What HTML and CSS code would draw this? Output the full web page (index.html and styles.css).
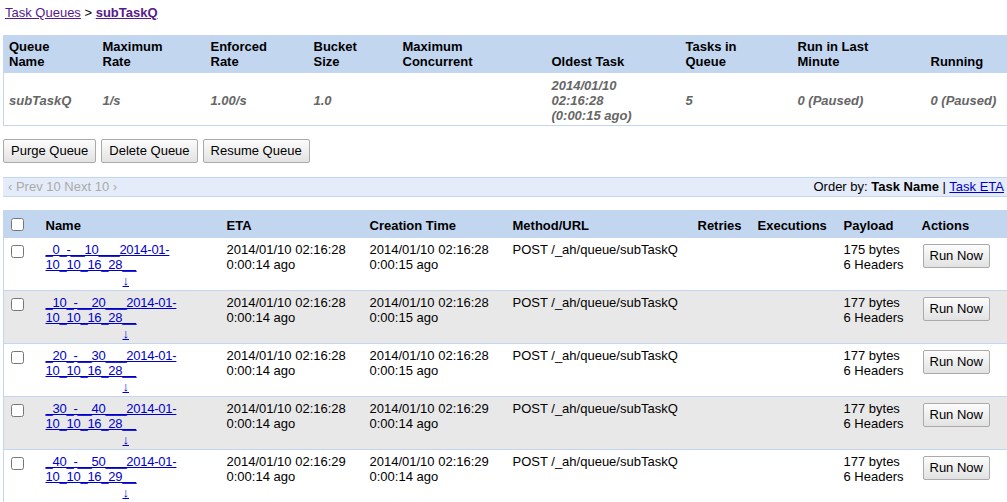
FILE: index.html
```html
<!DOCTYPE html>
<html lang="en">
<head>
  <meta charset="UTF-8" />
  <title>subTaskQ - Task Queues</title>
  <link rel="stylesheet" href="styles.css">
</head>
<body>

  <div class="crumbs">
    <a href="#" class="visited">Task Queues</a> &gt; <a href="#" class="visited"><b>subTaskQ</b></a>
  </div>

  <!-- Queue summary -->
  <table class="queue">
    <colgroup>
      <col style="width:94px"><col style="width:108px"><col style="width:103px">
      <col style="width:89px"><col style="width:149px"><col style="width:134px">
      <col style="width:112px"><col style="width:133px"><col style="width:82px">
    </colgroup>
    <thead>
      <tr>
        <th>Queue<br>Name</th>
        <th>Maximum<br>Rate</th>
        <th>Enforced<br>Rate</th>
        <th>Bucket<br>Size</th>
        <th>Maximum<br>Concurrent</th>
        <th>Oldest Task</th>
        <th>Tasks in<br>Queue</th>
        <th>Run in Last<br>Minute</th>
        <th>Running</th>
      </tr>
    </thead>
    <tbody>
      <tr>
        <td>subTaskQ</td>
        <td>1/s</td>
        <td>1.00/s</td>
        <td>1.0</td>
        <td></td>
        <td>2014/01/10<br>02:16:28<br>(0:00:15 ago)</td>
        <td>5</td>
        <td>0 (Paused)</td>
        <td>0 (Paused)</td>
      </tr>
    </tbody>
  </table>

  <div class="actions">
    <button class="btn">Purge Queue</button>
    <button class="btn">Delete Queue</button>
    <button class="btn">Resume Queue</button>
  </div>

  <div class="pager">
    <span class="disabled">&lsaquo; Prev 10 Next 10 &rsaquo;</span>
    <span class="order">Order by: <b>Task Name</b> | <a href="#">Task ETA</a></span>
  </div>

  <!-- Tasks -->
  <table class="tasks">
    <colgroup>
      <col style="width:37px"><col style="width:181px"><col style="width:143px">
      <col style="width:143px"><col style="width:185px"><col style="width:60px">
      <col style="width:86px"><col style="width:78px"><col style="width:91px">
    </colgroup>
    <thead>
      <tr>
        <th class="check"><input type="checkbox"></th>
        <th>Name</th>
        <th>ETA</th>
        <th>Creation Time</th>
        <th>Method/URL</th>
        <th>Retries</th>
        <th>Executions</th>
        <th>Payload</th>
        <th>Actions</th>
      </tr>
    </thead>
    <tbody>
      <tr>
        <td class="check"><input type="checkbox"></td>
        <td><a href="#" class="name">_0_-__10___2014-01-<br>10_10_16_28__</a><a href="#" class="expand">&darr;</a></td>
        <td>2014/01/10 02:16:28<br>0:00:14 ago</td>
        <td>2014/01/10 02:16:28<br>0:00:15 ago</td>
        <td>POST /_ah/queue/subTaskQ</td>
        <td></td>
        <td></td>
        <td>175 bytes<br>6 Headers</td>
        <td><button class="btn run">Run Now</button></td>
      </tr>
      <tr class="alt">
        <td class="check"><input type="checkbox"></td>
        <td><a href="#" class="name">_10_-__20___2014-01-<br>10_10_16_28__</a><a href="#" class="expand">&darr;</a></td>
        <td>2014/01/10 02:16:28<br>0:00:14 ago</td>
        <td>2014/01/10 02:16:28<br>0:00:15 ago</td>
        <td>POST /_ah/queue/subTaskQ</td>
        <td></td>
        <td></td>
        <td>177 bytes<br>6 Headers</td>
        <td><button class="btn run">Run Now</button></td>
      </tr>
      <tr>
        <td class="check"><input type="checkbox"></td>
        <td><a href="#" class="name">_20_-__30___2014-01-<br>10_10_16_28__</a><a href="#" class="expand">&darr;</a></td>
        <td>2014/01/10 02:16:28<br>0:00:14 ago</td>
        <td>2014/01/10 02:16:28<br>0:00:15 ago</td>
        <td>POST /_ah/queue/subTaskQ</td>
        <td></td>
        <td></td>
        <td>177 bytes<br>6 Headers</td>
        <td><button class="btn run">Run Now</button></td>
      </tr>
      <tr class="alt">
        <td class="check"><input type="checkbox"></td>
        <td><a href="#" class="name">_30_-__40___2014-01-<br>10_10_16_28__</a><a href="#" class="expand">&darr;</a></td>
        <td>2014/01/10 02:16:28<br>0:00:14 ago</td>
        <td>2014/01/10 02:16:29<br>0:00:14 ago</td>
        <td>POST /_ah/queue/subTaskQ</td>
        <td></td>
        <td></td>
        <td>177 bytes<br>6 Headers</td>
        <td><button class="btn run">Run Now</button></td>
      </tr>
      <tr>
        <td class="check"><input type="checkbox"></td>
        <td><a href="#" class="name">_40_-__50___2014-01-<br>10_10_16_29__</a><a href="#" class="expand">&darr;</a></td>
        <td>2014/01/10 02:16:29<br>0:00:14 ago</td>
        <td>2014/01/10 02:16:29<br>0:00:14 ago</td>
        <td>POST /_ah/queue/subTaskQ</td>
        <td></td>
        <td></td>
        <td>177 bytes<br>6 Headers</td>
        <td><button class="btn run">Run Now</button></td>
      </tr>
    </tbody>
  </table>

</body>
</html>
```

FILE: styles.css
```css
* {
  box-sizing: border-box;
}

body {
  margin: 0;
  padding: 5px 0 0 3px;
  font-family: 'Liberation Sans', Arial, sans-serif;
  font-size: 13px;
  line-height: 15px;
  color: #000;
  background: #fff;
  overflow: hidden;
}

a {
  color: #00c;
}

a.visited {
  color: #551a8b;
}

.crumbs {
  padding-left: 2px;
  height: 16px;
  line-height: 16px;
  font-size: 13px;
}

table {
  border-collapse: collapse;
  table-layout: fixed;
  width: 1004px;
}

th {
  background: #c3d6f0;
  text-align: left;
  font-weight: bold;
  padding: 0 5px;
}

td {
  padding: 0 5px;
}

/* queue summary */
.queue {
  margin-top: 14px;
  border-left: 1px solid #c3d6f0;
}

.queue th {
  vertical-align: bottom;
  height: 38px;
  padding-top: 4px;
  padding-bottom: 4px;
}

.queue td {
  height: 52px;
  padding-top: 4px;
  color: #666;
  font-weight: bold;
  font-style: italic;
  vertical-align: middle;
  border-bottom: 1px solid #c3d6f0;
}

/* buttons */
.actions {
  display: flex;
  gap: 5px;
  margin-top: 13px;
}

.btn {
  font-family: 'Liberation Sans', Arial, sans-serif;
  font-size: 13px;
  line-height: 16px;
  height: 24px;
  padding: 3px 7px;
  border: 1px solid #aaa;
  border-radius: 2px;
  background: linear-gradient(#fcfcfc, #e2e2e2);
  color: #000;
}

/* pager */
.pager {
  display: flex;
  justify-content: space-between;
  margin-top: 14px;
  height: 20px;
  line-height: 17px;
  padding: 0 3px 0 5px;
  background: #e5ecf9;
  border-top: 1px solid #c3d6f0;
  border-bottom: 1px solid #c3d6f0;
}

.pager .disabled {
  color: #aaa;
}

/* tasks */
.tasks {
  margin-top: 13px;
  border-left: 1px solid #c3d6f0;
}

.tasks th {
  height: 28px;
  vertical-align: middle;
  padding-top: 4px;
}

.tasks td {
  height: 53px;
  vertical-align: top;
  padding-top: 4px;
  border-top: 1px solid #c3d6f0;
}

.tasks tr.alt td {
  background: #e8e8e8;
}

.tasks .check {
  padding: 0 0 0 7px;
}

.tasks td.check {
  padding-top: 5px;
}

.tasks input[type=checkbox] {
  width: 13px;
  height: 13px;
  margin: 0;
  vertical-align: middle;
}

.name {
  letter-spacing: -0.25px;
}

.expand {
  display: block;
  width: 12px;
  margin: 1px 0 0 77px;
  font-size: 13px;
  line-height: 15px;
}

.run {
  margin: 2px 0 0 1px;
  padding: 3px 6px;
}
```
